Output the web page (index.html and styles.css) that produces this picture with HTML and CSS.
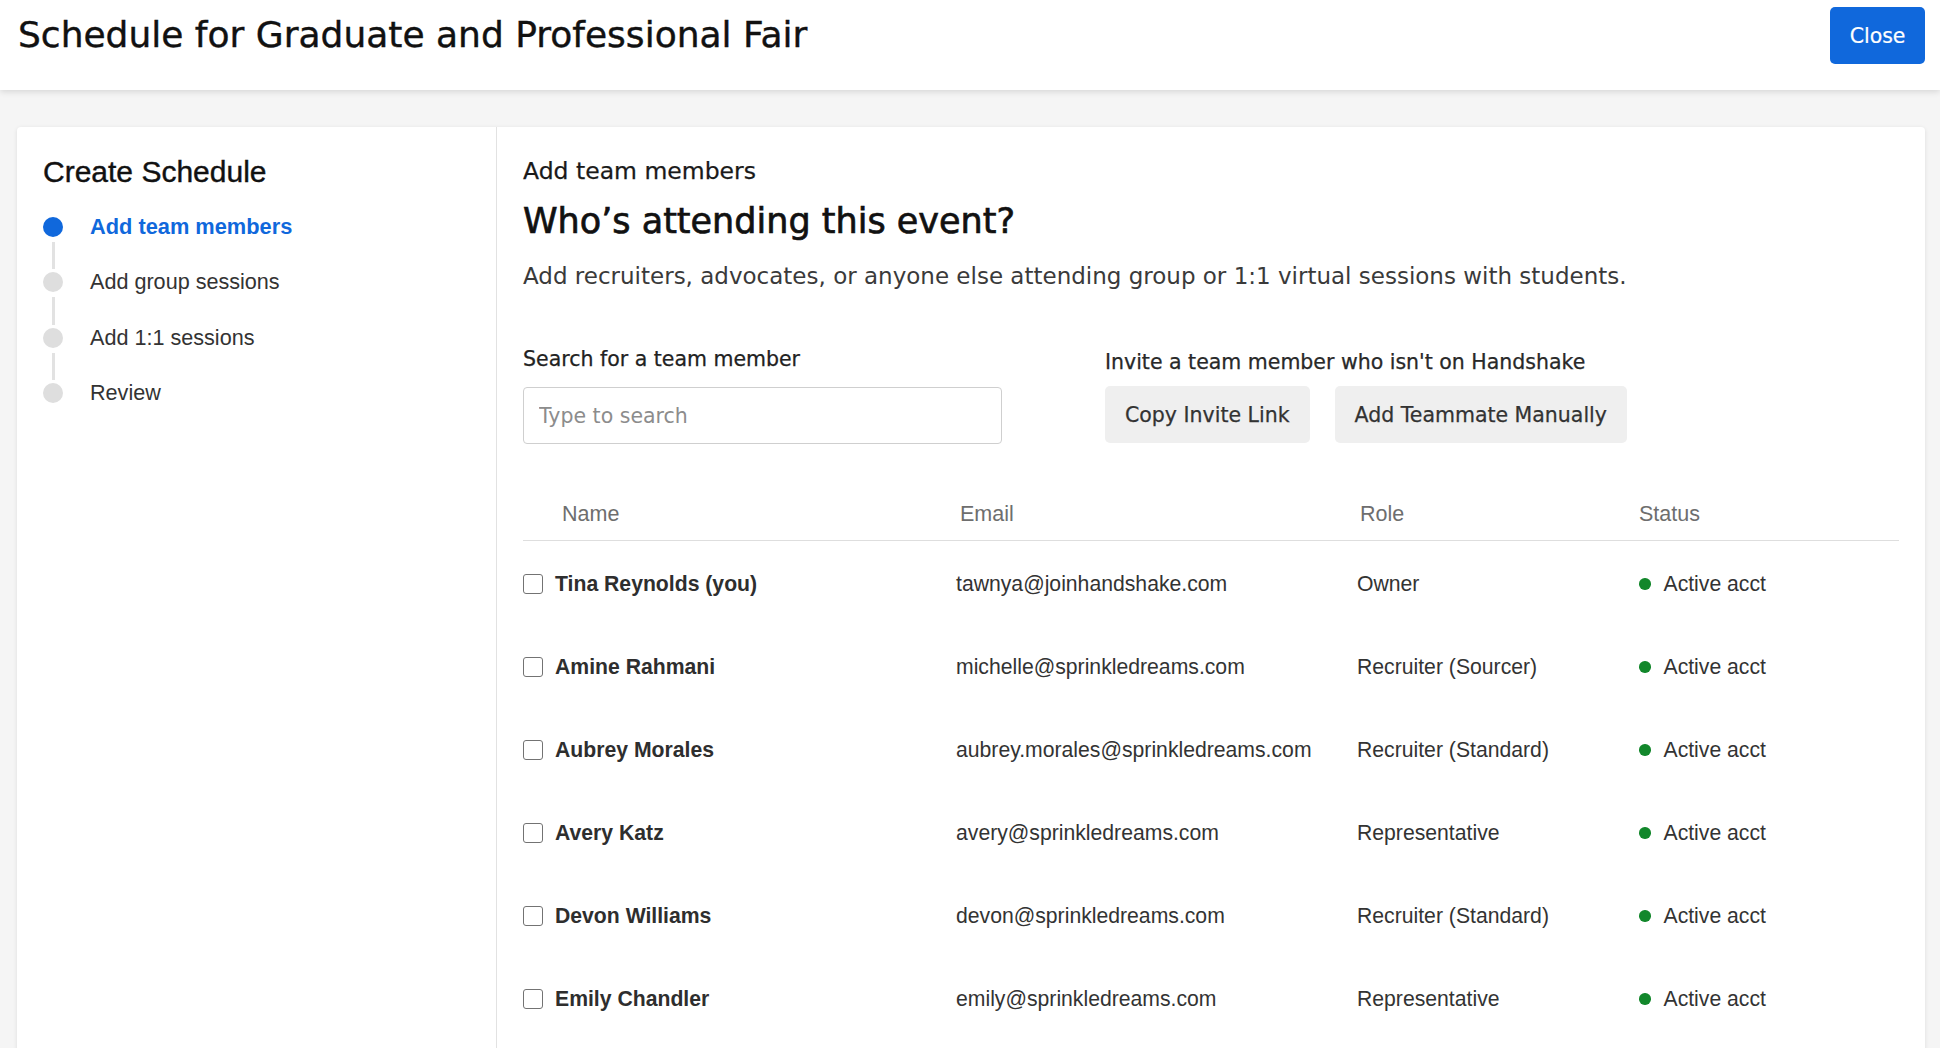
FILE: index.html
```html
<!DOCTYPE html>
<html lang="en">
<head>
<meta charset="utf-8">
<title>Schedule for Graduate and Professional Fair</title>
<link rel="stylesheet" href="styles.css">
</head>
<body>
<header class="topbar">
  <h1 class="page-title">Schedule for Graduate and Professional Fair</h1>
  <button class="btn-close" type="button">Close</button>
</header>
<main class="page">
  <section class="card">
    <aside class="sidebar">
      <h2 class="sidebar-title">Create Schedule</h2>
      <ol class="steps">
        <li class="step is-active"><span class="marker"><span class="dot"></span><span class="line"></span></span><span class="step-label">Add team members</span></li>
        <li class="step"><span class="marker"><span class="dot"></span><span class="line"></span></span><span class="step-label">Add group sessions</span></li>
        <li class="step"><span class="marker"><span class="dot"></span><span class="line"></span></span><span class="step-label">Add 1:1 sessions</span></li>
        <li class="step"><span class="marker"><span class="dot"></span></span><span class="step-label">Review</span></li>
      </ol>
    </aside>
    <div class="content">
      <p class="eyebrow">Add team members</p>
      <h2 class="heading">Who’s attending this event?</h2>
      <p class="lead">Add recruiters, advocates, or anyone else attending group or 1:1 virtual sessions with students.</p>
      <div class="form-row">
        <div class="search-col">
          <label class="field-label search-label" for="search">Search for a team member</label>
          <input id="search" class="search-input" type="text" placeholder="Type to search">
        </div>
        <div class="invite-col">
          <p class="field-label invite-label">Invite a team member who isn't on Handshake</p>
          <div class="btn-row">
            <button class="btn-secondary" type="button">Copy Invite Link</button>
            <button class="btn-secondary" type="button">Add Teammate Manually</button>
          </div>
        </div>
      </div>
      <div class="table">
        <div class="table-head">
          <div class="th th-name">Name</div>
          <div class="th th-email">Email</div>
          <div class="th th-role">Role</div>
          <div class="th th-status">Status</div>
        </div>
        <div class="tr">
          <div class="td td-name"><span class="checkbox"></span><span class="member-name">Tina Reynolds (you)</span></div>
          <div class="td">tawnya@joinhandshake.com</div>
          <div class="td">Owner</div>
          <div class="td td-status"><span class="status-dot"></span>Active acct</div>
        </div>
        <div class="tr">
          <div class="td td-name"><span class="checkbox"></span><span class="member-name">Amine Rahmani</span></div>
          <div class="td">michelle@sprinkledreams.com</div>
          <div class="td">Recruiter (Sourcer)</div>
          <div class="td td-status"><span class="status-dot"></span>Active acct</div>
        </div>
        <div class="tr">
          <div class="td td-name"><span class="checkbox"></span><span class="member-name">Aubrey Morales</span></div>
          <div class="td">aubrey.morales@sprinkledreams.com</div>
          <div class="td">Recruiter (Standard)</div>
          <div class="td td-status"><span class="status-dot"></span>Active acct</div>
        </div>
        <div class="tr">
          <div class="td td-name"><span class="checkbox"></span><span class="member-name">Avery Katz</span></div>
          <div class="td">avery@sprinkledreams.com</div>
          <div class="td">Representative</div>
          <div class="td td-status"><span class="status-dot"></span>Active acct</div>
        </div>
        <div class="tr">
          <div class="td td-name"><span class="checkbox"></span><span class="member-name">Devon Williams</span></div>
          <div class="td">devon@sprinkledreams.com</div>
          <div class="td">Recruiter (Standard)</div>
          <div class="td td-status"><span class="status-dot"></span>Active acct</div>
        </div>
        <div class="tr">
          <div class="td td-name"><span class="checkbox"></span><span class="member-name">Emily Chandler</span></div>
          <div class="td">emily@sprinkledreams.com</div>
          <div class="td">Representative</div>
          <div class="td td-status"><span class="status-dot"></span>Active acct</div>
        </div>
      </div>
    </div>
  </section>
</main>
</body>
</html>
```

FILE: styles.css
```css
* {
  box-sizing: border-box;
}

html,
body {
  margin: 0;
  padding: 0;
  height: 100%;
  overflow: hidden;
}

body {
  background: #f5f5f5;
  font-family: "Liberation Sans", Arial, sans-serif;
  color: #333;
}

/* Top bar */
.topbar {
  position: relative;
  z-index: 2;
  height: 90px;
  padding: 7px 15px 0 18px;
  display: flex;
  justify-content: space-between;
  align-items: flex-start;
  background: #fff;
  box-shadow: 0 2px 6px rgba(0, 0, 0, 0.12);
}

.page-title {
  margin: 0;
  font-family: "DejaVu Sans", sans-serif;
  font-size: 36px;
  font-weight: normal;
  line-height: 55px;
  color: #111;
  -webkit-text-stroke: 0.4px #111;
}

.btn-close {
  height: 57px;
  padding: 0 19.5px;
  border: none;
  border-radius: 5px;
  background: #1068dc;
  color: #fff;
  font-family: "DejaVu Sans", sans-serif;
  font-size: 20.5px;
  -webkit-text-stroke: 0.2px #fff;
  cursor: pointer;
}

/* Page and card */
.page {
  padding: 37px 15px 0 17px;
}

.card {
  display: flex;
  min-height: 960px;
  background: #fff;
  border-radius: 4px;
  box-shadow: 0 1px 4px rgba(0, 0, 0, 0.1);
}

/* Sidebar */
.sidebar {
  width: 480px;
  flex-shrink: 0;
  padding: 27px 26px 0 26px;
  border-right: 1px solid #e2e2e2;
}

.sidebar-title {
  margin: 0;
  font-size: 30px;
  font-weight: normal;
  line-height: 36px;
  color: #111;
  -webkit-text-stroke: 0.4px #111;
}

.steps {
  list-style: none;
  margin: 26.5px 0 0 0;
  padding: 0;
}

.step {
  display: flex;
  align-items: flex-start;
  gap: 27px;
  height: 55.5px;
}

.marker {
  display: flex;
  flex-direction: column;
  align-items: center;
  width: 20px;
  height: 100%;
  flex-shrink: 0;
}

.dot {
  width: 20px;
  height: 20px;
  border-radius: 50%;
  background: #dedede;
  flex-shrink: 0;
}

.line {
  width: 3px;
  flex: 1;
  margin: 5px 0 3px;
  background: #e2e2e2;
}

.step-label {
  font-size: 21.6px;
  line-height: 20px;
  color: #333;
}

.step.is-active .dot {
  background: #1068dc;
}

.step.is-active .step-label {
  color: #1068dc;
  font-weight: bold;
  font-size: 21.8px;
}

/* Content */
.content {
  flex: 1;
  padding: 30px 26px 0 26px;
  font-family: "DejaVu Sans", sans-serif;
}

.eyebrow {
  margin: 0;
  font-size: 23.5px;
  line-height: 28px;
  color: #1a1a1a;
  -webkit-text-stroke: 0.25px #1a1a1a;
}

.heading {
  margin: 14.5px 0 0 0;
  font-size: 35px;
  font-weight: normal;
  line-height: 42px;
  color: #111;
  -webkit-text-stroke: 0.7px #111;
}

.lead {
  margin: 20.5px 0 0 0;
  font-size: 23px;
  line-height: 28px;
  color: #3a3a3a;
}

.form-row {
  display: flex;
  gap: 103px;
  margin-top: 53px;
}

.search-col {
  width: 479px;
  padding-top: 3px;
  display: flex;
  flex-direction: column;
}

.invite-col {
  padding-top: 5.5px;
}

.field-label {
  margin: 0;
  font-size: 20.5px;
  line-height: 26px;
  color: #222;
  -webkit-text-stroke: 0.25px #222;
}

.search-label {
  margin-bottom: 15px;
}

.invite-label {
  margin-bottom: 11.5px;
  color: #2a2a2a;
}

.search-input {
  height: 57px;
  width: 100%;
  padding: 0 15px;
  border: 1px solid #cfcfcf;
  border-radius: 4px;
  font-family: "DejaVu Sans", sans-serif;
  font-size: 20.5px;
  color: #222;
  background: #fff;
}

.search-input::placeholder {
  color: #8c8c8c;
}

.btn-row {
  display: flex;
  gap: 25px;
}

.btn-secondary {
  height: 57px;
  padding: 0 20px;
  border: none;
  border-radius: 5px;
  background: #efefef;
  color: #333;
  font-family: "DejaVu Sans", sans-serif;
  font-size: 20.5px;
  -webkit-text-stroke: 0.25px #333;
  cursor: pointer;
}

/* Table */
.table {
  margin-top: 57px;
  font-family: "Liberation Sans", Arial, sans-serif;
}

.table-head,
.tr {
  display: grid;
  grid-template-columns: 433px 401px 282px 1fr;
}

.table-head {
  height: 40px;
  border-bottom: 1px solid #dedede;
}

.th {
  font-size: 21.5px;
  line-height: 26px;
  color: #6e6e6e;
}

.th-name {
  padding-left: 39px;
}

.th-email {
  padding-left: 4px;
}

.th-role {
  padding-left: 3px;
}

.tr {
  height: 83px;
  padding-top: 3px;
  align-items: center;
}

.td {
  font-size: 21.2px;
  color: #333;
  display: flex;
  align-items: center;
}

.td-name {
  gap: 12px;
}

.checkbox {
  width: 20px;
  height: 20px;
  border: 1.5px solid #737373;
  border-radius: 3px;
  background: #fff;
  flex-shrink: 0;
}

.member-name {
  font-weight: bold;
  color: #2e2e2e;
}

.td-status {
  gap: 13px;
}

.status-dot {
  width: 11.5px;
  height: 11.5px;
  border-radius: 50%;
  background: #12872b;
  flex-shrink: 0;
}
```
